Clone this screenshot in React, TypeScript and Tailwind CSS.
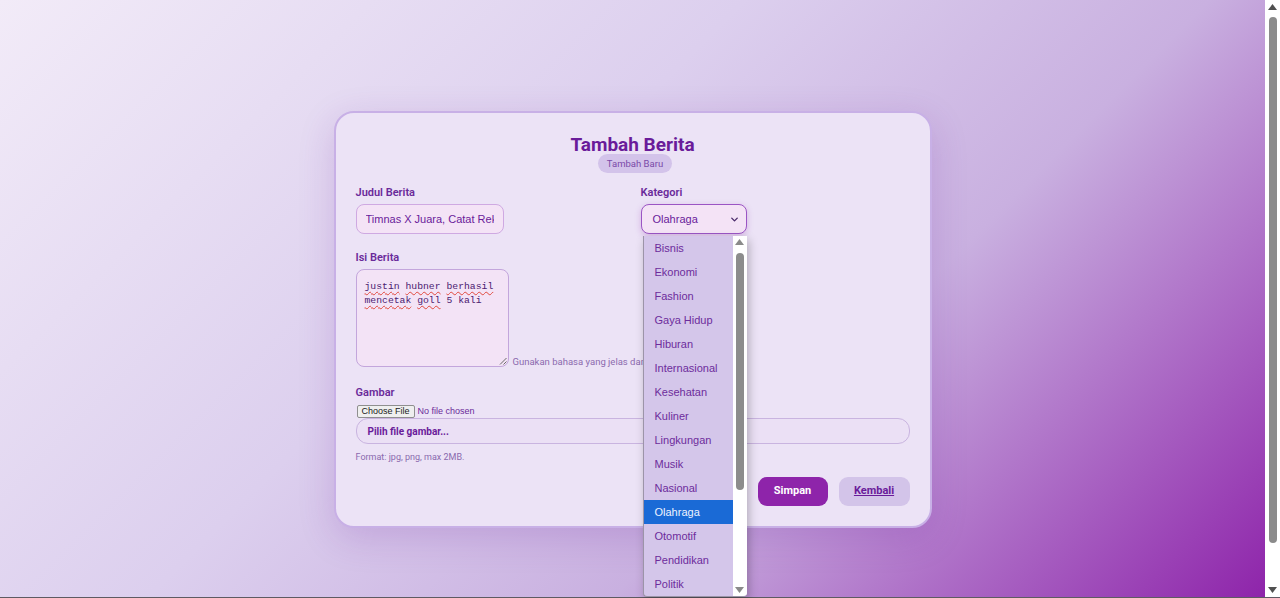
import { ChevronDown } from "lucide-react";

const categories = [
  "Bisnis",
  "Ekonomi",
  "Fashion",
  "Gaya Hidup",
  "Hiburan",
  "Internasional",
  "Kesehatan",
  "Kuliner",
  "Lingkungan",
  "Musik",
  "Nasional",
  "Olahraga",
  "Otomotif",
  "Pendidikan",
  "Politik",
  "Sains",
  "Teknologi",
  "Travel",
];

function ScrollArrow({ up, className }: { up?: boolean; className?: string }) {
  return (
    <svg width="9" height="6" viewBox="0 0 9 6" className={className}>
      {up ? <path d="M4.5 0 L9 6 L0 6 Z" fill="currentColor" /> : <path d="M0 0 L9 0 L4.5 6 Z" fill="currentColor" />}
    </svg>
  );
}

function CategoryPopup() {
  return (
    <div className="absolute left-[2px] top-[32px] z-20 flex h-[361px] w-[104px] overflow-hidden rounded-b-[4px] border-l border-b border-[#9c94a8] bg-[#d4c6ea] shadow-[2px_4px_10px_rgba(0,0,0,0.25)]">
      {/* options */}
      <ul className="flex-1 font-['Liberation_Sans',Arial,sans-serif] text-[11px]">
        {categories.map((c) => (
          <li
            key={c}
            className={`flex h-6 items-center pl-[11px] ${
              c === "Olahraga" ? "bg-[#1a6ad6] text-[#eef4ff]" : "text-[#6d2c9c]"
            }`}
          >
            {c}
          </li>
        ))}
      </ul>
      {/* scrollbar */}
      <div className="flex w-[14px] flex-col items-center bg-white py-[3px]">
        <ScrollArrow up className="text-[#8a8a8a]" />
        <div className="mt-[8px] h-[237px] w-[8px] rounded-full bg-[#8c8c8c]" />
        <div className="flex-1" />
        <ScrollArrow className="text-[#8a8a8a]" />
      </div>
    </div>
  );
}

const typo = "underline decoration-wavy decoration-[#e0483c] decoration-1 underline-offset-[2px]";

export default function App() {
  return (
    <div className="flex h-screen flex-col overflow-hidden font-[Roboto,'Noto_Sans',sans-serif]">
      <div className="flex min-h-0 flex-1">
        <main className="flex flex-1 justify-center bg-[linear-gradient(135deg,#f2ebf8_0%,#dccfee_40%,#c9b0e0_65%,#8e24aa_100%)] pt-[111px]">
          <div className="h-fit w-[598px] rounded-[20px] border-2 border-[#c8b0e6] bg-[#ece3f6] px-5 pb-5 pt-[22px] shadow-[0_10px_36px_rgba(106,27,154,0.18)]">
            {/* Header */}
            <div className="flex flex-col items-center">
              <h1 className="text-[19px] font-bold leading-[19px] text-[#6a1b9a]">Tambah Berita</h1>
              <span className="ml-[5px] rounded-full bg-[#d3c3ea] px-[9px] py-[3px] text-[9.5px] leading-[13px] text-[#7a4aa8]">
                Tambah Baru
              </span>
            </div>

            {/* Judul + Kategori */}
            <div className="mt-[13px] grid grid-cols-2 gap-4">
              <div>
                <label className="block text-[11px] font-semibold leading-[13px] text-[#6a2a9a]">Judul Berita</label>
                <input
                  defaultValue="Timnas X Juara, Catat Rekor Baru"
                  className="mt-[5px] h-[30px] w-[148px] rounded-lg border border-[#cfa9e2] bg-[#f4e3f6] px-[9px] font-['Liberation_Sans',Arial,sans-serif] text-[11px] text-[#6a1b9a] outline-none"
                />
              </div>
              <div>
                <label className="block text-[11px] font-semibold leading-[13px] text-[#6a2a9a]">Kategori</label>
                <div className="relative mt-[5px] w-[106px]">
                  <div className="flex h-[30px] items-center justify-between rounded-lg border-[1.5px] border-[#9b55c4] bg-[#f4e3f6] pl-[11px] pr-[6px] font-['Liberation_Sans',Arial,sans-serif] text-[11px] text-[#6a1b9a] shadow-[0_2px_6px_rgba(142,36,170,0.25)]">
                    Olahraga
                    <ChevronDown className="h-[11px] w-[11px] text-[#4a2a6a]" strokeWidth={3} />
                  </div>
                  <CategoryPopup />
                </div>
              </div>
            </div>

            {/* Isi Berita */}
            <div className="mt-[17px]">
              <label className="block text-[11px] font-semibold leading-[13px] text-[#6a2a9a]">Isi Berita</label>
              <div className="mt-[5px] flex items-end gap-[4px]">
                <div className="relative h-[98px] w-[153px] shrink-0 rounded-lg border border-[#c3a6dc] bg-[#f3e3f6] px-[8px] py-[10px] font-['Liberation_Mono','DejaVu_Sans_Mono',monospace] text-[9.75px] leading-[14px] text-[#4b2070]">
                  <div>
                    <span className={typo}>justin</span> <span className={typo}>hubner</span>{" "}
                    <span className={typo}>berhasil</span>
                  </div>
                  <div>
                    <span className={typo}>mencetak</span> <span className={typo}>goll</span> 5 kali
                  </div>
                  <svg width="8" height="8" viewBox="0 0 8 8" className="absolute bottom-[1px] right-[1px] text-[#6b6b6b]">
                    <path d="M7.5 1 L1 7.5 M7.5 4.5 L4.5 7.5" stroke="currentColor" strokeWidth="1" />
                  </svg>
                </div>
                <span className="mb-[-1px] whitespace-nowrap text-[9.5px] leading-[12px] text-[#8b6aae]">
                  Gunakan bahasa yang jelas dan singkat.
                </span>
              </div>
            </div>

            {/* Gambar */}
            <div className="mt-[19px]">
              <label className="block text-[11px] font-semibold leading-[13px] text-[#6a2a9a]">Gambar</label>
              <div className="mt-[6px] flex h-[13px] items-center gap-[3px] pl-[1px] font-['Liberation_Sans',Arial,sans-serif] text-[9px] text-[#6a2a9a]">
                <span className="rounded-[2px] border border-[#8f8f8f] bg-[#efefef] px-[4px] leading-[11px] text-[#1a1a1a]">
                  Choose File
                </span>
                <span>No file chosen</span>
              </div>
              <div className="flex h-[26px] items-center rounded-xl border border-[#c9b4e0] bg-[#ebe0f5] px-[11px] text-[10px] font-bold text-[#6a1b9a]">
                Pilih file gambar...
              </div>
              <p className="mt-[7px] text-[9px] leading-[12px] text-[#8a6aae]">Format: jpg, png, max 2MB.</p>
            </div>

            {/* Actions */}
            <div className="mt-[14px] flex justify-end gap-[11px]">
              <button className="h-[29px] w-[70px] rounded-[9px] bg-[#8e24aa] text-[11px] font-bold text-white">
                Simpan
              </button>
              <button className="h-[29px] w-[71px] rounded-[9px] bg-[#d3c4e9] text-[11px] font-bold text-[#6a1b9a] underline">
                Kembali
              </button>
            </div>
          </div>
        </main>

        {/* page scrollbar */}
        <aside className="flex w-[15px] flex-col items-center bg-white py-[4px]">
          <ScrollArrow up className="text-[#505050]" />
          <div className="mt-[7px] h-[526px] w-[8px] rounded-full bg-[#8b8b8b]" />
          <div className="flex-1" />
          <ScrollArrow className="text-[#505050]" />
        </aside>
      </div>
      <div className="h-px bg-[#5e5a62]" />
    </div>
  );
}
